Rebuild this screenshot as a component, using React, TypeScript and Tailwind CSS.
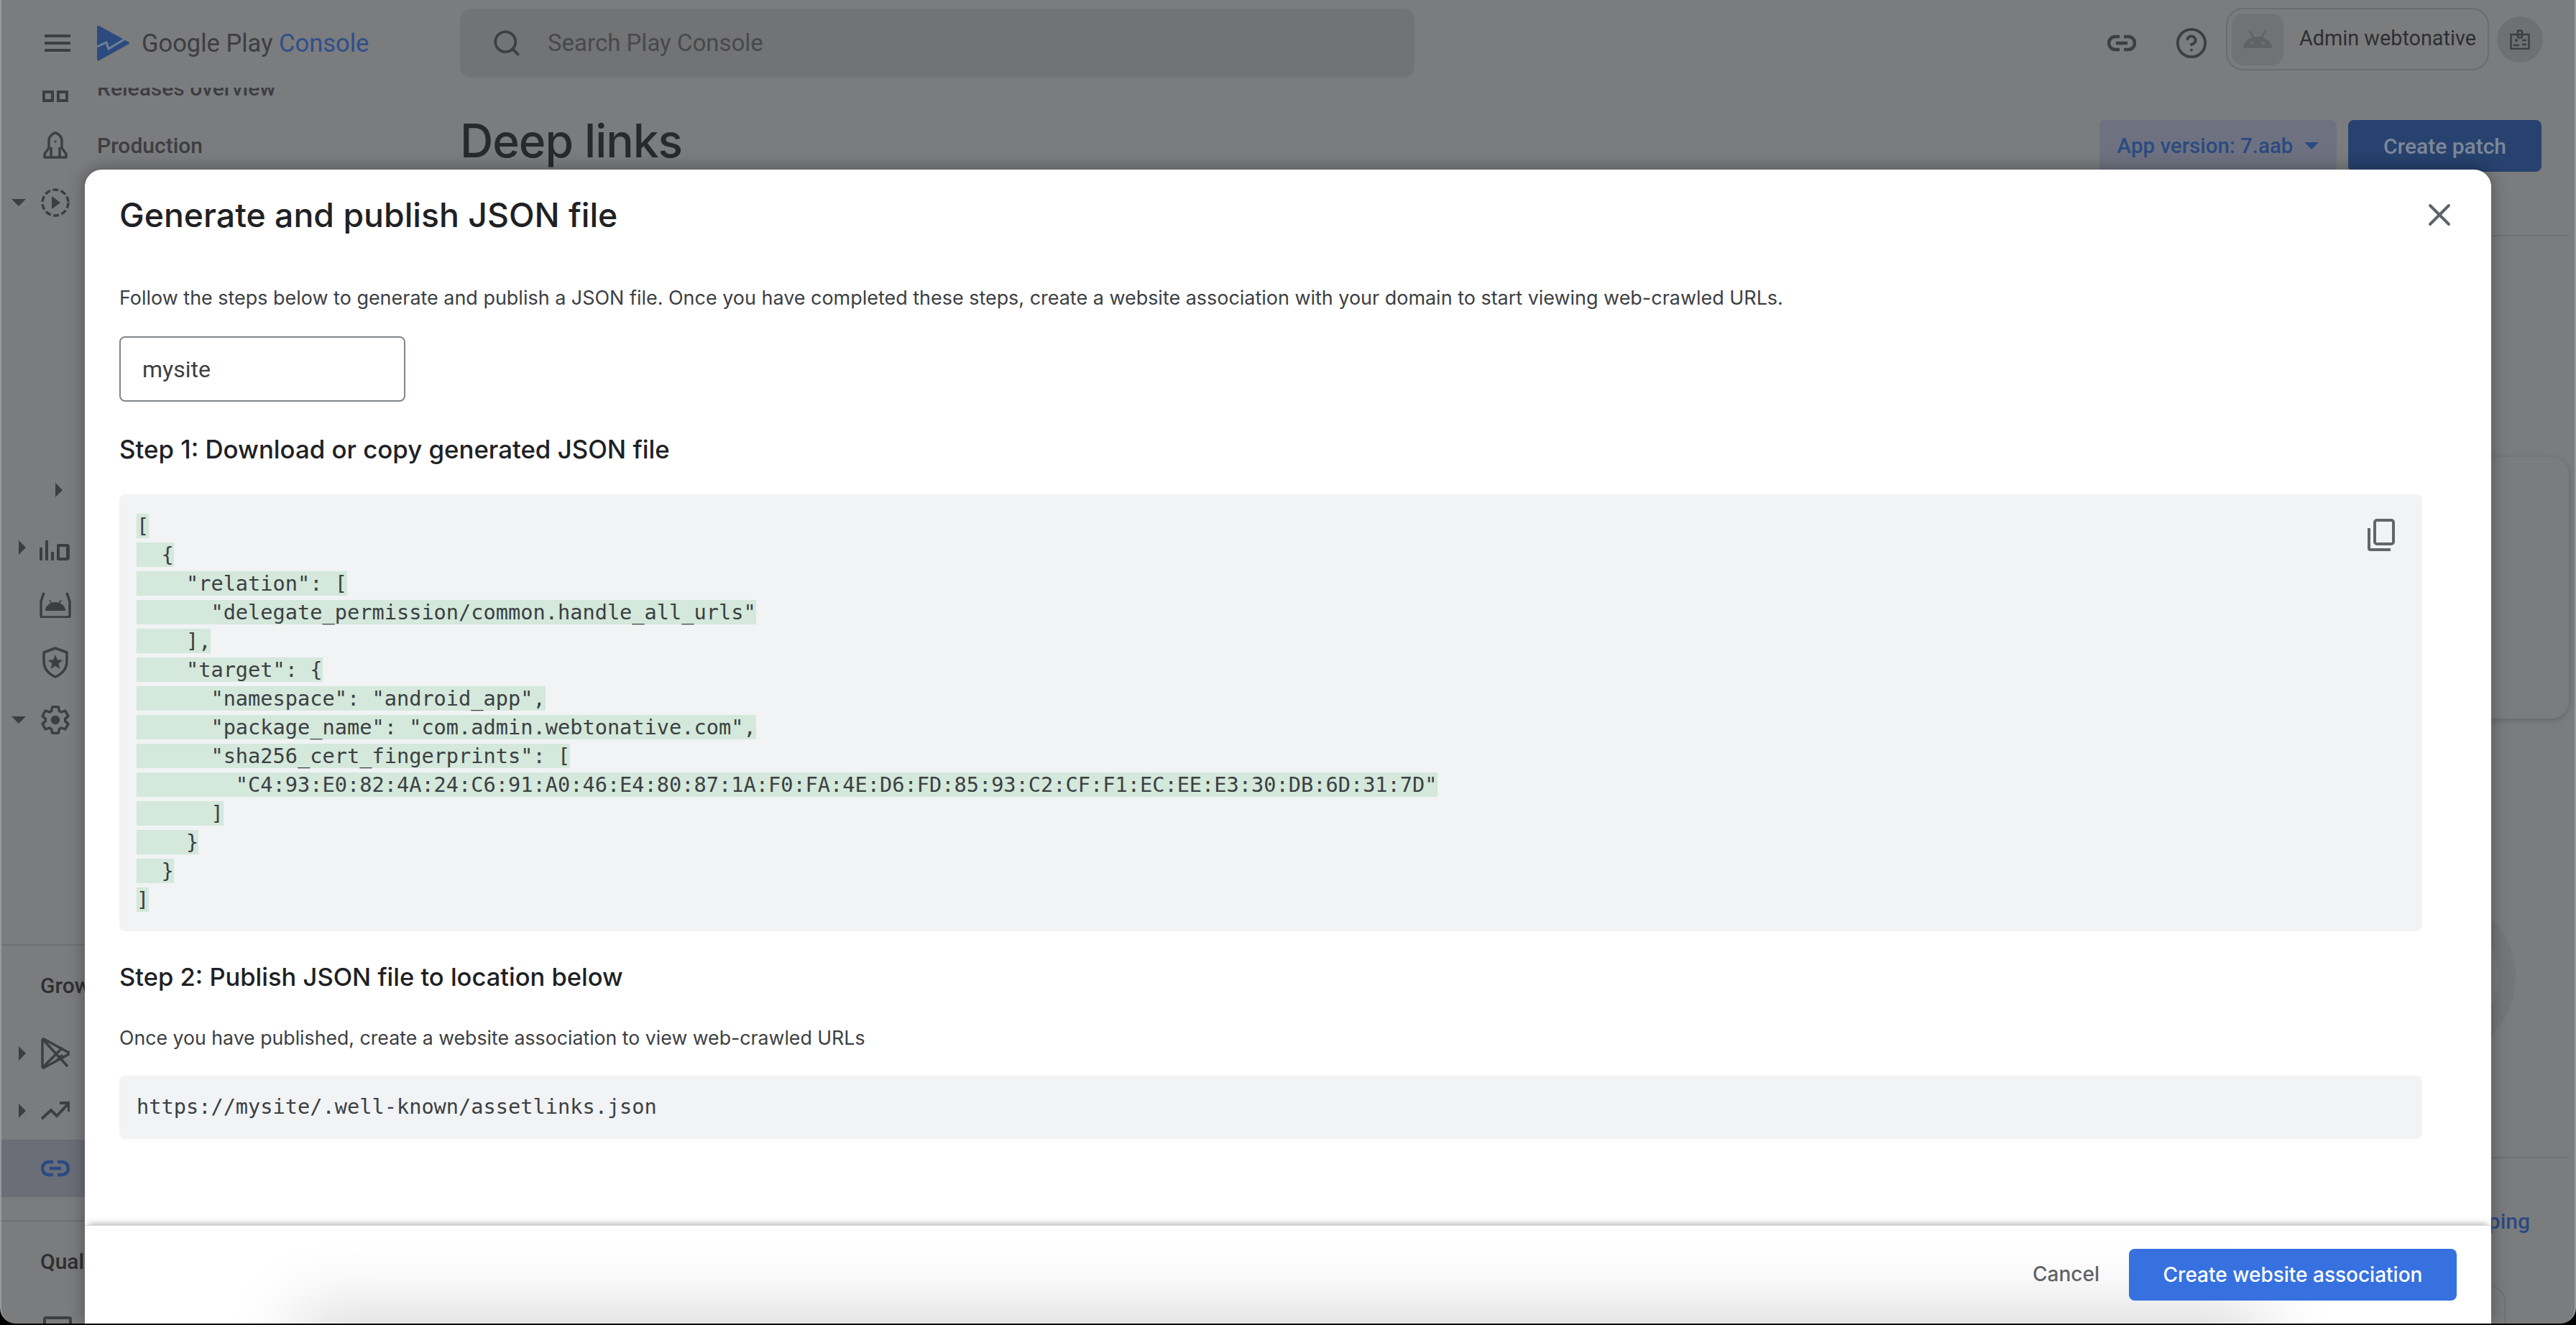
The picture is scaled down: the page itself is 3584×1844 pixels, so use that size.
import React from "react";
import { CircleHelp, Search, X } from "lucide-react";

const json = `[
  {
    "relation": [
      "delegate_permission/common.handle_all_urls"
    ],
    "target": {
      "namespace": "android_app",
      "package_name": "com.admin.webtonative.com",
      "sha256_cert_fingerprints": [
        "C4:93:E0:82:4A:24:C6:91:A0:46:E4:80:87:1A:F0:FA:4E:D6:FD:85:93:C2:CF:F1:EC:EE:E3:30:DB:6D:31:7D"
      ]
    }
  }
]`;

const ink = "#3d3e41";

function LinkIcon({ color = ink }: { color?: string }) {
  return (
    <svg width="40" height="24" viewBox="0 0 40 24" fill="none" stroke={color} strokeWidth="4.5">
      <path d="M17 3h-6a9 9 0 0 0 0 18h6" />
      <path d="M23 3h6a9 9 0 0 1 0 18h-6" />
      <path d="M12 12h16" />
    </svg>
  );
}

function Caret({ dir }: { dir: "right" | "down" }) {
  return dir === "right" ? (
    <svg width="10" height="20" viewBox="0 0 10 20"><path d="M0 0l10 10L0 20z" fill={ink} /></svg>
  ) : (
    <svg width="20" height="10" viewBox="0 0 20 10"><path d="M0 0h20L10 10z" fill={ink} /></svg>
  );
}

function Row({ caret, icon, label, extra }: { caret?: "right" | "down"; icon?: React.ReactNode; label?: string; extra?: string }) {
  return (
    <div className={`flex h-[80px] items-center ${extra ?? ""}`}>
      <div className="flex w-[47px] shrink-0 justify-end pr-[13px]">
        {caret ? <Caret dir={caret} /> : null}
      </div>
      <div className="flex w-[56px] shrink-0 justify-center">{icon}</div>
      <span className="ml-[30px] whitespace-nowrap text-[30px] font-medium text-[#3d3e41]">{label}</span>
    </div>
  );
}

function Sidebar() {
  return (
    <aside className="h-[1720px] w-[638px] shrink-0 overflow-hidden">
      <div className="-mt-[40px]">
        <Row
          label="Releases overview"
          icon={
            <svg width="36" height="40" viewBox="0 0 36 40" fill="none" stroke={ink} strokeWidth="4">
              <rect x="2" y="2" width="12" height="12" />
              <rect x="22" y="2" width="12" height="12" />
              <rect x="2" y="26" width="12" height="12" />
              <rect x="22" y="26" width="12" height="12" />
            </svg>
          }
        />
        <Row
          label="Production"
          icon={
            <svg width="34" height="38" viewBox="0 0 34 38" fill="none" stroke={ink} strokeWidth="3.5">
              <path d="M2 36h30v-5l-6-8V12C26 7 20 2 17 2S8 7 8 12v11l-6 8z" strokeLinejoin="round" />
              <path d="M11 36V22M23 36V22" />
              <circle cx="17" cy="14" r="1.6" fill={ink} stroke="none" />
            </svg>
          }
        />
        <Row
          caret="down"
          icon={
            <svg width="40" height="40" viewBox="0 0 40 40" fill="none">
              <circle cx="20" cy="20" r="18" stroke={ink} strokeWidth="3.5" strokeDasharray="8 3.5" />
              <path d="M15 11l12 9-12 9z" fill={ink} />
            </svg>
          }
        />
        <div className="h-[320px]" />
        <div className="flex h-[80px] items-center">
          <div className="ml-[75px]"><Caret dir="right" /></div>
        </div>
        <Row
          caret="right"
          icon={
            <svg className="mt-[10px]" width="44" height="30" viewBox="0 0 44 30" fill={ink}>
              <rect x="0" y="10" width="4" height="18" />
              <rect x="8" y="0" width="4" height="28" />
              <rect x="16" y="16" width="4" height="12" />
              <path d="M26 5h12a4 4 0 0 1 4 4v15a4 4 0 0 1-4 4H26a2 2 0 0 1-2-2V7a2 2 0 0 1 2-2zm2 4v15h9V9z" fillRule="evenodd" />
            </svg>
          }
        />
        <Row
          icon={
            <svg width="44" height="36" viewBox="0 0 44 36" fill="none">
              <path d="M6 1L2 13v20a2 2 0 0 0 2 2h36a2 2 0 0 0 2-2V13L38 1" stroke={ink} strokeWidth="3.5" />
              <path d="M8 26a14 12 0 0 1 28 0z" fill={ink} />
              <path d="M14 11l3 5M30 11l-3 5" stroke={ink} strokeWidth="1.5" />
            </svg>
          }
        />
        <Row
          icon={
            <svg width="38" height="44" viewBox="0 0 38 44" fill="none">
              <path d="M19 2L3 8v12c0 11 7 18 16 22 9-4 16-11 16-22V8z" stroke={ink} strokeWidth="3.5" strokeLinejoin="round" />
              <path d="M19 11l2.8 7.2 7.7.5-6 4.9 2 7.4-6.5-4.2-6.500 4.200 2-7.400-6-4.900 7.700-.5z" fill={ink} />
            </svg>
          }
        />
        <Row
          caret="down"
          icon={
            <svg width="44" height="44" viewBox="0 0 24 24" fill="none">
              <path
                d="M19.43 12.98c.04-.32.07-.64.07-.98 0-.34-.03-.66-.07-.98l2.11-1.65c.19-.15.24-.42.12-.64l-2-3.46c-.12-.22-.39-.3-.61-.22l-2.49 1c-.52-.4-1.08-.73-1.69-.98l-.38-2.65C14.46 2.18 14.25 2 14 2h-4c-.25 0-.46.18-.49.42l-.38 2.65c-.61.25-1.17.59-1.69.98l-2.49-1c-.23-.09-.49 0-.61.22l-2 3.46c-.13.22-.07.49.12.64l2.11 1.65c-.04.32-.07.65-.07.98 0 .33.03.66.07.98l-2.11 1.65c-.19.15-.24.42-.12.64l2 3.46c.12.22.39.3.61.22l2.49-1c.52.4 1.08.73 1.69.98l.38 2.65c.03.24.24.42.49.42h4c.25 0 .46-.18.49-.42l.38-2.65c.61-.25 1.17-.59 1.69-.98l2.49 1c.23.09.49 0 .61-.22l2-3.46c.12-.22.07-.49-.12-.64l-2.11-1.65z"
                stroke={ink}
                strokeWidth="1.9"
              />
              <circle cx="12" cy="12" r="3.4" fill={ink} />
            </svg>
          }
        />
        <div className="h-[274px] border-b-2 border-[#6f7072]" />
        <div className="flex h-[110px] items-center pl-[54px] text-[30px] font-medium text-[#2e2f31]">Grow</div>
        <Row
          caret="right"
          icon={
            <svg width="40" height="44" viewBox="0 0 40 44" fill="none" stroke={ink} strokeWidth="3.5" strokeLinejoin="round">
              <path d="M4 2L37 20a2 2 0 0 1 0 4L4 42a2 2 0 0 1-2-2V4a2 2 0 0 1 2-2z" />
              <path d="M3 3l34 37M3 41L30 14M22 32l8-8" />
            </svg>
          }
        />
        <Row
          caret="right"
          icon={
            <svg width="40" height="26" viewBox="0 0 40 26" fill="none" stroke={ink} strokeWidth="4">
              <path d="M1 24l13-12 8 8L38 3" />
              <path d="M26 2h13v12" />
            </svg>
          }
        />
        <Row extra="bg-[#6b6e77]" icon={<LinkIcon color="#2b4a82" />} />
        <div className="h-[34px] border-b-2 border-[#6f7072]" />
        <div className="flex h-[110px] items-center pl-[54px] text-[30px] font-medium text-[#2e2f31]">Quality</div>
        <div className="ml-[58px] mt-[22px] h-[20px] w-[40px] rounded-t-[4px] border-[4px] border-[#3d3e41]" />
      </div>
    </aside>
  );
}

function Main() {
  return (
    <main className="flex min-w-0 flex-1 flex-col overflow-hidden pr-[8px]">
      <div className="flex h-[116px] shrink-0 items-start justify-between pr-[38px]">
        <h1 className="mt-[42px] text-[64px] font-medium leading-none tracking-[-1px] text-[#28292b]" style={{ fontFamily: "Inter, sans-serif" }}>Deep links</h1>
        <div className="mt-[45px] flex gap-[16px]">
          <div className="flex h-[72px] w-[330px] items-center justify-center gap-[16px] rounded-[8px] bg-[#6e7280] text-[29.500px] font-medium text-[#2b4a82]">
            App version: 7.aab
            <svg width="20" height="10" viewBox="0 0 20 10"><path d="M0 0h20L10 10z" fill="#2b4a82" /></svg>
          </div>
          <div className="flex h-[72px] w-[269px] items-center justify-center rounded-[8px] bg-[#27426f] text-[30px] font-medium text-[#7d8797]">
            Create patch
          </div>
        </div>
      </div>
      <div className="mt-[89px] h-[2px] shrink-0 bg-[#6f7072]" />
      <div className="mt-[307px] h-[364px] shrink-0 rounded-[24px] bg-[#7b7c7e] shadow-[0_2px_8px_rgba(0,0,0,0.2)]" />
      <div className="flex h-[610px] shrink-0 justify-end pr-[74px] pt-[245px]">
        <svg width="230" height="230" viewBox="0 0 230 230" fill="none">
          <circle cx="115" cy="115" r="103" stroke="#757678" strokeWidth="24" />
        </svg>
      </div>
      <div className="h-[2px] shrink-0 bg-[#6f7072]" />
      <div className="mt-[65px] shrink-0 text-right">
        <span className="mr-[54px] text-[30px] font-medium text-[#2b4a82]">Learn about mapping</span>
      </div>
      <div className="ml-[2600px] mt-[66px] h-[100px] w-[246px] shrink-0 rounded-[24px] border-2 border-[#707173]" />
    </main>
  );
}

function Header() {
  return (
    <header className="flex h-[122px] shrink-0 items-start">
      <div className="flex h-[120px] w-[638px] shrink-0 items-center pl-[60px]">
        <svg width="36" height="24" viewBox="0 0 36 24" fill={ink}>
          <rect width="36" height="4" />
          <rect y="10" width="36" height="4" />
          <rect y="20" width="36" height="4" />
        </svg>
        <svg className="ml-[36px]" width="46" height="50" viewBox="0 0 46 50">
          <path d="M1 3a2 2 0 0 1 3-2l40 22a2 2 0 0 1 0 4L4 49a2 2 0 0 1-3-2z" fill="#2c4a7e" />
          <path d="M1 30l13-6 3 9 23-14" fill="none" stroke="#6f8096" strokeWidth="3" />
        </svg>
        <span className="ml-[17px] whitespace-nowrap text-[34.500px] leading-none text-[#3d3e41]" style={{ fontFamily: "Roboto, sans-serif" }}>
          Google Play <span className="text-[#2f4f8a]">Console</span>
        </span>
      </div>
      <div className="mt-[12px] flex h-[96px] w-[1328px] items-center rounded-[16px] bg-[#727375] pl-[44px]">
        <Search size={42} strokeWidth={2.1} color={ink} />
        <span className="ml-[36px] text-[33px] text-[#48494b]">Search Play Console</span>
      </div>
      <div className="mt-[11px] flex flex-1 items-start justify-end pr-[44px]">
        <div className="mt-[37px]"><LinkIcon /></div>
        <div className="ml-[54px] mt-[26px]"><CircleHelp size={46} strokeWidth={2} color={ink} /></div>
        <div className="ml-[25px] flex h-[87px] w-[366px] rounded-[24px] border-2 border-[#6b6c6e] p-[6px]">
          <div className="flex h-[72px] w-[72px] items-center justify-center rounded-[16px] bg-[#717274]">
            <svg width="42" height="26" viewBox="0 0 42 26" fill="#616265">
              <path d="M1 25a20 16 0 0 1 40 0z" />
              <path d="M10 1l5 9M32 1l-5 9" stroke="#616265" strokeWidth="2.500" />
              <circle cx="13" cy="18" r="2" fill="#717274" />
              <circle cx="29" cy="18" r="2" fill="#717274" />
            </svg>
          </div>
          <span className="ml-[22px] mt-[14px] text-[28.800px] leading-[40px] whitespace-nowrap text-[#2e2f31]">Admin webtonative</span>
        </div>
        <div className="ml-[11px] mt-[12px] flex h-[64px] w-[64px] items-center justify-center rounded-full bg-[#6f7072]">
          <svg width="28" height="28" viewBox="0 0 28 28" fill="none" stroke={ink} strokeWidth="2.500">
            <rect x="1.500" y="7" width="25" height="20" />
            <rect x="11" y="1.500" width="6" height="10" rx="2" />
            <circle cx="9" cy="15" r="2" fill={ink} stroke="none" />
            <path d="M5 22h8M17 15h6M17 21h6" />
          </svg>
        </div>
      </div>
    </header>
  );
}

function Dialog() {
  return (
    <section
      className="absolute left-[116px] top-[236px] flex h-[1606px] w-[3348px] flex-col overflow-hidden rounded-t-[24px] bg-white shadow-[0_0_24px_rgba(0,0,0,0.35)]"
      style={{ fontFamily: "Inter, sans-serif" }}
    >
      <div className="pointer-events-none absolute bottom-[-60px] left-[327px] right-[346px] h-[48px] shadow-[0_0_100px_30px_rgba(0,0,0,0.16)]" />
      <div className="relative flex h-[126px] shrink-0 items-center justify-between pl-[48px] pr-[46px]">
        <h2 className="text-[46.400px] font-medium leading-none text-[#202124]">Generate and publish JSON file</h2>
        <X size={52} strokeWidth={1.8} color="#5f6368" />
      </div>
      <div className="relative min-h-0 flex-1 pl-[48px] pr-[96px]">
        <p className="mt-[33px] text-[26.950px] leading-[40px] text-[#3c4043]">
          Follow the steps below to generate and publish a JSON file. Once you have completed these steps, create a website association with your domain to start viewing web-crawled URLs.
        </p>
        <div className="mt-[33px] flex h-[91px] w-[398px] items-center rounded-[8px] border-2 border-[#80868b] pl-[30px] text-[32px] text-[#3c4043]" style={{ fontFamily: "Roboto, sans-serif" }}>
          mysite
        </div>
        <h3 className="mt-[46px] text-[34.800px] font-medium leading-[40px] text-[#202124]">Step 1: Download or copy generated JSON file</h3>
        <div className="relative mt-[43px] h-[608px] rounded-[8px] bg-[#f1f3f4] px-[24px] py-[24px]">
          <pre className="text-[28.630px] leading-[40px] text-[#3c4043]" style={{ fontFamily: '"DejaVu Sans Mono", monospace' }}>
            <span className="bg-[#d4e8db]">{json}</span>
          </pre>
          <svg className="absolute right-[38px] top-[34px]" width="38" height="45" viewBox="0 0 38 45" fill="none" stroke="#62656b" strokeWidth="4">
            <rect x="10" y="2" width="26" height="33" rx="3" />
            <path d="M2 13v28a2 2 0 0 0 2 2h28" />
          </svg>
        </div>
        <h3 className="mt-[44px] text-[34.500px] font-medium leading-[40px] text-[#202124]">Step 2: Publish JSON file to location below</h3>
        <p className="mt-[44px] text-[26.700px] leading-[40px] text-[#3c4043]">Once you have published, create a website association to view web-crawled URLs</p>
        <div className="mt-[33px] flex h-[88px] items-center rounded-[8px] bg-[#f1f3f4] px-[24px] pb-[2px] text-[28.630px] text-[#3c4043]" style={{ fontFamily: '"DejaVu Sans Mono", monospace' }}>
          https://mysite/.well-known/assetlinks.json
        </div>
      </div>
      <div className="relative h-[137px] shrink-0 border-t border-[#dcdcdc] shadow-[0_-6px_9px_-5px_rgba(0,0,0,0.35)]">
        <div className="flex items-start justify-end pr-[48px] pt-[32px]">
          <span className="mr-[41px] mt-[15px] text-[28px] font-medium leading-[40px] text-[#5f6368]">Cancel</span>
          <div className="flex h-[72px] w-[456px] items-center justify-center rounded-[8px] bg-[#3771e0] text-[28px] font-medium text-white">
            Create website association
          </div>
        </div>
      </div>
    </section>
  );
}

export default function App() {
  return (
    <div className="relative h-[1844px] w-[3584px] overflow-hidden bg-black" style={{ fontFamily: "Roboto, sans-serif" }}>
      <div className="relative flex h-[1842px] flex-col overflow-hidden rounded-b-[22px] border-x-2 border-[#98999b] bg-[#7b7c7e]">
        <Header />
        <div className="flex min-h-0 flex-1">
          <Sidebar />
          <Main />
        </div>
        <Dialog />
      </div>
    </div>
  );
}
